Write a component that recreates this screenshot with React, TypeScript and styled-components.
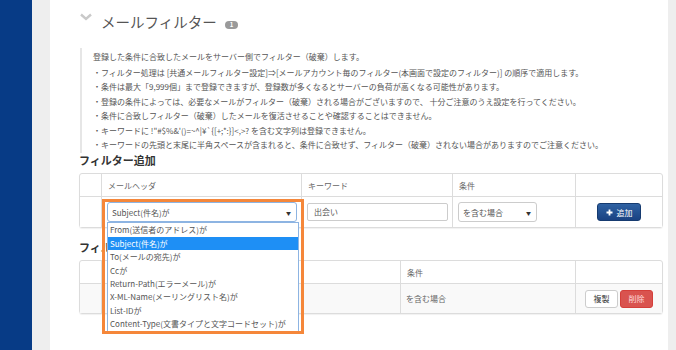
import React from 'react';
import styled, { createGlobalStyle } from 'styled-components';

const GlobalStyle = createGlobalStyle`
  html, body { margin: 0; padding: 0; }
  body {
    font-family: "Noto Sans CJK JP", "Noto Sans", sans-serif;
    background: #fff;
  }
`;

const notes = [
  '・フィルター処理は [共通メールフィルター設定]⇒[メールアカウント毎のフィルター(本画面で設定のフィルター)] の順序で適用します。',
  '・条件は最大「9,999個」まで登録できますが、登録数が多くなるとサーバーの負荷が高くなる可能性があります。',
  '・登録の条件によっては、必要なメールがフィルター（破棄）される場合がございますので、 十分ご注意のうえ設定を行ってください。',
  '・条件に合致しフィルター（破棄）したメールを復活させることや確認することはできません。',
  '・キーワードに !"#$%&\'()=~^|¥`{[+;*:}]<,>? を含む文字列は登録できません。',
  '・キーワードの先頭と末尾に半角スペースが含まれると、条件に合致せず、フィルター（破棄）されない場合がありますのでご注意ください。',
];

const headerOptions = [
  'From(送信者のアドレス)が',
  'Subject(件名)が',
  'To(メールの宛先)が',
  'Ccが',
  'Return-Path(エラーメール)が',
  'X-ML-Name(メーリングリスト名)が',
  'List-IDが',
  'Content-Type(文書タイプと文字コードセット)が',
];

const Page = styled.div`
  display: flex;
  width: 676px;
  height: 350px;
  overflow: hidden;
`;

const Sidebar = styled.div`
  width: 32px;
  flex-shrink: 0;
  background: #073b86;
`;

const Gutter = styled.div<{ $w: number }>`
  width: ${p => p.$w}px;
  flex-shrink: 0;
  background: #eeeeee;
`;

const Main = styled.main`
  flex: 1;
  background: #fff;
  padding: 12px 5px 0 29px;
  color: #555;
`;

const TitleRow = styled.div`
  display: flex;
  align-items: center;
  height: 20px;
`;

const Chevron = styled.svg`
  align-self: flex-start;
  margin: 1px 9px 0 1px;
`;

const Title = styled.h2`
  margin: 0;
  font-size: 14.5px;
  line-height: 20px;
  font-weight: 400;
  color: #555;
`;

const Badge = styled.span`
  margin: 5px 0 0 8px;
  padding: 0 5px;
  border-radius: 5px;
  background: #9a9a9a;
  color: #fff;
  font-size: 6px;
  line-height: 8px;
  font-weight: bold;
`;

const Notes = styled.div`
  margin: 16px 0 0 1px;
  padding: 2px 0 1px 11px;
  border-left: 2px solid #e6e6e6;
  font-size: 8px;
  line-height: 14.4px;
  color: #555;
`;

const NoteLine = styled.p<{ $lead?: boolean }>`
  margin: 0 0 ${p => (p.$lead ? '1.6px' : '0')};
  white-space: nowrap;
`;

const SectionTitle = styled.h3<{ $top: number }>`
  margin: ${p => p.$top}px 0 6px;
  font-size: 11px;
  line-height: 14px;
  font-weight: bold;
  color: #333;
`;

const Table = styled.table`
  width: 582px;
  table-layout: fixed;
  border-collapse: separate;
  border-spacing: 0;
  border: 1px solid #dcdcdc;
  border-radius: 3px;
  box-shadow: 0 1px 1px rgba(0, 0, 0, 0.06);
  font-size: 8px;
  color: #666;
`;

const Col = styled.col<{ $w: number }>`
  width: ${p => p.$w}px;
`;

const Th = styled.th`
  height: 22px;
  padding: 0 0 0 6px;
  text-align: left;
  font-weight: normal;
  border-left: 1px solid #dcdcdc;
  &:first-child { border-left: 0; }
`;

const Tr = styled.tr<{ $shade?: boolean }>`
  background: ${p => (p.$shade ? '#f9f9f9' : '#fff')};
`;

const Td = styled.td<{ $center?: boolean; $h: number }>`
  height: ${p => p.$h}px;
  padding: 0 5px;
  border-top: 1px solid #dcdcdc;
  border-left: 1px solid #dcdcdc;
  text-align: ${p => (p.$center ? 'center' : 'left')};
  white-space: nowrap;
  &:first-child { border-left: 0; }
`;

const SelectBox = styled.div<{ $w: number; $focus?: boolean }>`
  position: relative;
  display: flex;
  align-items: center;
  box-sizing: border-box;
  width: ${p => p.$w}px;
  height: 20px;
  padding: 0 5px 0 4px;
  border: 1px solid ${p => (p.$focus ? '#8db4e2' : '#cccccc')};
  border-radius: 3px;
  background: #fff;
  color: #555;
  font-size: 8px;
`;

const Caret = styled.span`
  margin-left: auto;
  font-size: 5px;
  color: #333;
`;

const Highlight = styled.div`
  position: absolute;
  left: -6px;
  top: -4px;
  width: 202px;
  height: 135px;
  box-sizing: border-box;
  border: 3px solid #f5873a;
  pointer-events: none;
  z-index: 4;
`;

const OptionList = styled.ul`
  position: absolute;
  top: 100%;
  left: -1px;
  width: 192px;
  margin: 1px 0 0;
  padding: 0;
  list-style: none;
  box-sizing: border-box;
  border: 1px solid #8db4e2;
  background: #fff;
  z-index: 3;
`;

const Option = styled.li<{ $active?: boolean }>`
  height: 13.4px;
  line-height: 13.4px;
  padding-left: 2px;
  font-size: 8px;
  color: ${p => (p.$active ? '#fff' : '#555')};
  background: ${p => (p.$active ? '#1e8ff5' : 'transparent')};
`;

const TextInput = styled.div`
  box-sizing: border-box;
  width: 141px;
  height: 18px;
  padding: 0 6px;
  border: 1px solid #cccccc;
  border-radius: 2px;
  line-height: 16px;
  color: #555;
  font-size: 8px;
`;

const AddButton = styled.button`
  display: inline-flex;
  align-items: center;
  justify-content: center;
  gap: 4px;
  width: 44px;
  height: 18px;
  padding: 0;
  border: 1px solid #163b70;
  border-radius: 3px;
  background: linear-gradient(#2f62a3, #1a4282);
  color: #fff;
  font-family: inherit;
  font-size: 8px;
`;

const SmallButton = styled.button<{ $danger?: boolean }>`
  width: 33px;
  height: 18px;
  padding: 0;
  margin-left: 2px;
  border: 1px solid ${p => (p.$danger ? '#d43f3a' : '#cccccc')};
  border-radius: 3px;
  background: ${p => (p.$danger ? '#d9534f' : '#fff')};
  color: ${p => (p.$danger ? '#ffd9d9' : '#333')};
  font-family: inherit;
  font-size: 8px;
  &:first-child { margin-left: 0; }
`;

export default function App() {
  return (
    <>
      <GlobalStyle />
      <Page>
        <Sidebar />
        <Gutter $w={18} />
        <Main>
          <TitleRow>
            <Chevron width="12" height="8" viewBox="0 0 12 8">
              <polyline points="1,1.5 6,6 11,1.5" fill="none" stroke="#c9c9c9" strokeWidth="2.4" />
            </Chevron>
            <Title>メールフィルター</Title>
            <Badge>1</Badge>
          </TitleRow>

          <Notes>
            <NoteLine $lead>登録した条件に合致したメールをサーバー側でフィルター（破棄）します。</NoteLine>
            {notes.map(n => (
              <NoteLine key={n}>{n}</NoteLine>
            ))}
          </Notes>

          <SectionTitle $top={0}>フィルター追加</SectionTitle>
          <Table>
            <colgroup>
              <Col $w={21} />
              <Col $w={200} />
              <Col $w={151} />
              <Col $w={123} />
              <Col $w={87} />
            </colgroup>
            <thead>
              <tr>
                <Th />
                <Th>メールヘッダ</Th>
                <Th>キーワード</Th>
                <Th>条件</Th>
                <Th />
              </tr>
            </thead>
            <tbody>
              <Tr>
                <Td $h={30} />
                <Td $h={30}>
                  <SelectBox $w={190} $focus>
                    Subject(件名)が
                    <Caret>▼</Caret>
                    <Highlight />
                    <OptionList>
                      {headerOptions.map(o => (
                        <Option key={o} $active={o === 'Subject(件名)が'}>{o}</Option>
                      ))}
                    </OptionList>
                  </SelectBox>
                </Td>
                <Td $h={30}>
                  <TextInput>出会い</TextInput>
                </Td>
                <Td $h={30}>
                  <SelectBox $w={79}>
                    を含む場合
                    <Caret>▼</Caret>
                  </SelectBox>
                </Td>
                <Td $h={30} $center>
                  <AddButton>
                    <svg width="7" height="7" viewBox="0 0 7 7">
                      <path d="M3.5 0.5v6M0.5 3.5h6" stroke="#fff" strokeWidth="1.8" />
                    </svg>
                    追加
                  </AddButton>
                </Td>
              </Tr>
            </tbody>
          </Table>

          <SectionTitle $top={12}>フィルター一覧</SectionTitle>
          <Table>
            <colgroup>
              <Col $w={21} />
              <Col $w={150} />
              <Col $w={149} />
              <Col $w={175} />
              <Col $w={87} />
            </colgroup>
            <thead>
              <tr>
                <Th />
                <Th />
                <Th />
                <Th>条件</Th>
                <Th />
              </tr>
            </thead>
            <tbody>
              <Tr $shade>
                <Td $h={29} />
                <Td $h={29} />
                <Td $h={29} />
                <Td $h={29}>を含む場合</Td>
                <Td $h={29} $center>
                  <SmallButton>複製</SmallButton>
                  <SmallButton $danger>削除</SmallButton>
                </Td>
              </Tr>
            </tbody>
          </Table>
        </Main>
        <Gutter $w={10} />
      </Page>
    </>
  );
}
